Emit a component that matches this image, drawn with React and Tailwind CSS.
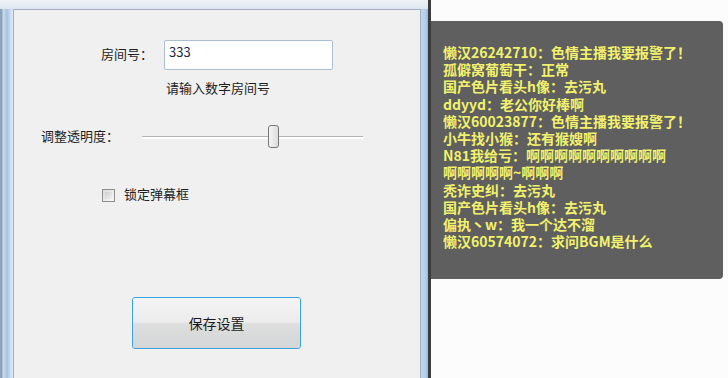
import React from 'react';

const cjk = { fontFamily: '"Noto Sans CJK SC", "Noto Sans", sans-serif' };

const danmaku = [
  '懒汉26242710：色情主播我要报警了！',
  '孤僻窝葡萄干：正常',
  '国产色片看头h像：去污丸',
  'ddyyd：老公你好棒啊',
  '懒汉60023877：色情主播我要报警了！',
  '小牛找小猴：还有猴嫂啊',
  'N81我给亏：啊啊啊啊啊啊啊啊啊啊',
  '啊啊啊啊啊~啊啊啊',
  '秃诈史纠：去污丸',
  '国产色片看头h像：去污丸',
  '偏执丶w：我一个达不溜',
  '懒汉60574072：求问BGM是什么',
];

function SettingsWindow() {
  return (
    <div className="relative z-10 w-[431px] h-[378px] flex flex-col shrink-0 bg-[#cfe0f1] border-r-[3px] border-[#3b3b3b] shadow-[10px_0_16px_rgba(0,0,0,0.4)]">
      {/* glass title edge */}
      <div className="h-[9px] bg-[linear-gradient(180deg,#eef2f7,#dde6f0)]" />
      <div className="flex flex-1">
        {/* left frame */}
        <div className="w-[13px] bg-[linear-gradient(90deg,#8ea2b8_0,#8ea2b8_2px,#c9def3_3px,#a9c3de_7px,#cde2f6_11px,#dfe9f3_13px)]" />
        {/* client area */}
        <div className="flex-1 flex flex-col bg-[#f0f0f0] border-t border-l border-r border-[#a3b0bf] text-[13px] text-[#1e1e1e]" style={cjk}>
          <div className="flex items-center pl-[87px] pt-[30px]">
            <span className="w-[52px] mb-[3px]">房间号：</span>
            <div className="ml-[11px] w-[169px] h-[30px] bg-white border border-[#abbfd3] rounded-[2px] pl-[4px] pt-[1px] text-[13px] text-[#1c2745]">
              333
            </div>
          </div>
          <div className="pl-[152px] mt-[9px] leading-[18px]">请输入数字房间号</div>

          <div className="flex items-center pl-[27px] mt-[28px] h-[24px]">
            <span className="w-[101px] mb-[3px]">调整透明度：</span>
            <div className="relative w-[221px] h-[3px] mt-[1px] border-t border-[#b4b4b4] bg-white">
              <div className="absolute left-[126px] top-[-12px] w-[11px] h-[23px] rounded-[3px] border border-[#767676] bg-[linear-gradient(90deg,#f6f6f6,#dcdcdc)]" />
            </div>
          </div>

          <div className="flex items-center pl-[88px] mt-[37px] h-[18px]">
            <div className="w-[13px] h-[13px] border border-[#8e8f8f] bg-[linear-gradient(135deg,#dcdcdc,#f7f7f7)] p-[2px]">
              <div className="w-full h-full bg-[linear-gradient(135deg,#cfcfcf,#f1f1f1)]" />
            </div>
            <span className="ml-[9px] mb-[2px]">锁定弹幕框</span>
          </div>

          <div className="pl-[118px] mt-[93px]">
            <button className="w-[169px] h-[52px] rounded-[3px] border border-[#39a3da] p-0 shadow-[inset_0_0_0_1px_#bde6f8]">
              <div className="w-full h-full rounded-[2px] flex items-center justify-center text-[14px] text-[#1b1b1b] bg-[linear-gradient(180deg,#f4f4f4_0%,#ececec_48%,#dedede_52%,#d3d5d7_100%)]">
                保存设置
              </div>
            </button>
          </div>
        </div>
        {/* right frame */}
        <div className="w-[7px] bg-[linear-gradient(90deg,#c0d6ec,#b4d0ee_60%,#9fb6cf)]" />
      </div>
    </div>
  );
}

function DanmakuPanel() {
  return (
    <div className="relative z-20 flex-1 h-[378px] bg-[#fcfcfc] pt-[21px] pr-[5px]">
      <div className="h-[258px] bg-[#5f5f5f] rounded-r-[4px] pl-[12px] pt-[23px]">
        {danmaku.map((line, i) => (
          <div key={i} className="text-[14px] leading-[17.2px] font-bold text-[#f1f16d] whitespace-nowrap" style={cjk}>
            {line}
          </div>
        ))}
      </div>
    </div>
  );
}

export default function App() {
  return (
    <div className="w-[728px] h-[378px] overflow-hidden flex bg-[#fcfcfc]">
      <SettingsWindow />
      <DanmakuPanel />
    </div>
  );
}
